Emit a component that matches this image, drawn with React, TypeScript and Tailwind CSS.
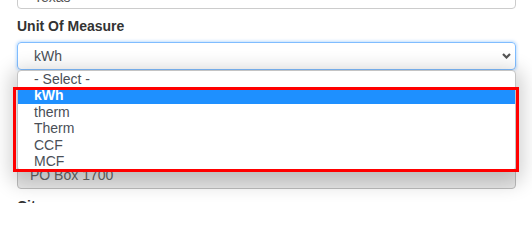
import React from "react";

const options = ["- Select -", "kWh", "therm", "Therm", "CCF", "MCF"];

const Chevron = () => (
  <svg width="9" height="6" viewBox="0 0 9 6" fill="none">
    <path d="M1 1 L4.5 4.5 L8 1" stroke="#555" strokeWidth="2.2" strokeLinejoin="miter" />
  </svg>
);

export default function App() {
  const selected = "kWh";

  return (
    <div className="relative h-[203px] w-[532px] overflow-hidden bg-white font-['Liberation_Sans',Arial,sans-serif]">
      <div className="pl-[17px] pr-[16px]">
        {/* state input, mostly scrolled off */}
        <div className="mt-[-19px] h-[28px] overflow-hidden rounded-[4px] border border-[#ccc] pl-[16px] text-[14px] leading-[30px] text-[#555]">
          Texas
        </div>

        <div className="mt-[7px] text-[14px] font-bold leading-[20px] text-[#333]">Unit Of Measure</div>

        {/* open select */}
        <div className="relative mt-[6px]">
          <div className="flex h-[28px] items-center justify-between rounded-[4px] border border-[#80bdff] pl-[16px] pr-[4px] shadow-[0_0_3px_1px_rgba(0,123,255,0.25)]">
            <span className="text-[14px] leading-[26px] text-[#495057]">{selected}</span>
            <Chevron />
          </div>

          <ul className="absolute left-0 right-0 top-full z-10 rounded-[4px] border border-[#c4c4c4] bg-white pb-[1px] shadow-[0_6px_20px_6px_rgba(0,0,0,0.2)]">
            {options.map((o) => (
              <li
                key={o}
                className={
                  o === selected
                    ? "h-[16.4px] bg-[#1e90ff] pl-[16px] text-[14px] font-bold leading-[16.4px] text-white"
                    : "h-[16.4px] pl-[16px] text-[14px] leading-[16.4px] text-[#4a4f57]"
                }
              >
                {o}
              </li>
            ))}
          </ul>
        </div>

        {/* fields hidden behind the open list */}
        <div className="mt-[7px] h-[20px]" />
        <div className="mt-[6px] h-[28px] rounded-[4px] border border-[#ccc]" />
        <div className="mt-[4px] h-[20px]" />

        <div className="mt-[6px] h-[28px] rounded-[4px] border border-[#bdbdbd] bg-[#e9e9e9] pl-[12px] text-[14px] leading-[26px] text-[#666]">
          PO Box 1700
        </div>

        <div className="mt-[7px] text-[14px] font-bold leading-[20px] text-[#333]">City</div>
      </div>

      {/* highlight box */}
      <div className="absolute left-[13px] top-[87px] z-20 h-[85px] w-[506px] border-[3px] border-[#ff0000]" />
    </div>
  );
}
